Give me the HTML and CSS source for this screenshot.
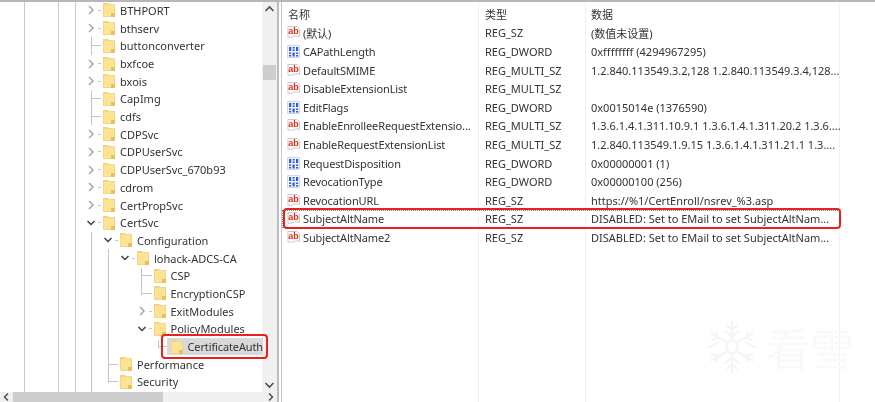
FILE: index.html
```html
<!DOCTYPE html>
<html lang="zh">
<head>
<meta charset="utf-8">
<title>Registry Editor</title>
<link rel="stylesheet" href="styles.css">
</head>
<body>
<svg class="defs" width="0" height="0" aria-hidden="true">
  <symbol id="folder" viewBox="0 0 12 14">
    <path d="M0 1h12v13H0z" fill="#f5d684"/>
    <path d="M1 2h10v11H1z" fill="#fde394"/>
    <path d="M8 10h4v4H8z" fill="#edc057"/>
    <path d="M0 0h5.500v1.500H0z" fill="#f2d27e"/>
  </symbol>
  <symbol id="closed" viewBox="0 0 10 12"><path d="M3 2l4 4-4 4" fill="none" stroke="#a6a6a6" stroke-width="1.500"/></symbol>
  <symbol id="open" viewBox="0 0 10 12"><path d="M1.500 4l3.500 3.500L8.500 4" fill="none" stroke="#404040" stroke-width="1.500"/></symbol>
  <symbol id="page" viewBox="0 0 13 13">
    <path d="M1 .5h9l2.500 2.500v7.500c-2-1-3-1-5.500 0s-4 1-6 .5z" fill="#fff" stroke="#c9c9c9"/>
  </symbol>
  <symbol id="bin" viewBox="0 0 13 13">
    <path d="M.5.500h12v12H.5z" fill="#f4f7fd" stroke="#ccd6ea"/>
    <path d="M2 2h2.200v4H2zM5.500 2h2.200v1.500H5.500zM9 2h2.200v4H9zM5.500 4.500h2.200V6H5.500zM2 7.500h2.200V9H2zM5.500 7.500h2.200v4H5.500zM9 7.500h2.200V9H9zM2 10h2.200v1.500H2zM9 10h2.200v1.500H9z" fill="#2f5ad6"/>
  </symbol>
</svg>

<div class="window">
  <div class="topbar"></div>
  <div class="panes">
    <div class="left">
      <div class="left-main">
        <div class="tree">
          <div class="row l0"><span class="slot short"><svg class="chev"><use href="#closed"/></svg></span><span class="item"><svg class="fold"><use href="#folder"/></svg><span>BTHPORT</span></span></div>
          <div class="row l0"><span class="slot short"><svg class="chev"><use href="#closed"/></svg></span><span class="item"><svg class="fold"><use href="#folder"/></svg><span>bthserv</span></span></div>
          <div class="row l0"><span class="slot long"></span><span class="item"><svg class="fold"><use href="#folder"/></svg><span>buttonconverter</span></span></div>
          <div class="row l0"><span class="slot short"><svg class="chev"><use href="#closed"/></svg></span><span class="item"><svg class="fold"><use href="#folder"/></svg><span>bxfcoe</span></span></div>
          <div class="row l0"><span class="slot short"><svg class="chev"><use href="#closed"/></svg></span><span class="item"><svg class="fold"><use href="#folder"/></svg><span>bxois</span></span></div>
          <div class="row l0"><span class="slot long"></span><span class="item"><svg class="fold"><use href="#folder"/></svg><span>CapImg</span></span></div>
          <div class="row l0"><span class="slot long"></span><span class="item"><svg class="fold"><use href="#folder"/></svg><span>cdfs</span></span></div>
          <div class="row l0"><span class="slot short"><svg class="chev"><use href="#closed"/></svg></span><span class="item"><svg class="fold"><use href="#folder"/></svg><span>CDPSvc</span></span></div>
          <div class="row l0"><span class="slot short"><svg class="chev"><use href="#closed"/></svg></span><span class="item"><svg class="fold"><use href="#folder"/></svg><span>CDPUserSvc</span></span></div>
          <div class="row l0"><span class="slot short"><svg class="chev"><use href="#closed"/></svg></span><span class="item"><svg class="fold"><use href="#folder"/></svg><span>CDPUserSvc_670b93</span></span></div>
          <div class="row l0"><span class="slot short"><svg class="chev"><use href="#closed"/></svg></span><span class="item"><svg class="fold"><use href="#folder"/></svg><span>cdrom</span></span></div>
          <div class="row l0"><span class="slot short"><svg class="chev"><use href="#closed"/></svg></span><span class="item"><svg class="fold"><use href="#folder"/></svg><span>CertPropSvc</span></span></div>
          <div class="row l0"><span class="slot short"><svg class="chev"><use href="#open"/></svg></span><span class="item"><svg class="fold"><use href="#folder"/></svg><span>CertSvc</span></span></div>
          <div class="row l1"><span class="slot short"><svg class="chev"><use href="#open"/></svg></span><span class="item"><svg class="fold"><use href="#folder"/></svg><span>Configuration</span></span></div>
          <div class="row l2"><span class="slot short"><svg class="chev"><use href="#open"/></svg></span><span class="item"><svg class="fold"><use href="#folder"/></svg><span>lohack-ADCS-CA</span></span></div>
          <div class="row l3"><span class="slot long"></span><span class="item"><svg class="fold"><use href="#folder"/></svg><span>CSP</span></span></div>
          <div class="row l3"><span class="slot long"></span><span class="item"><svg class="fold"><use href="#folder"/></svg><span>EncryptionCSP</span></span></div>
          <div class="row l3"><span class="slot short"><svg class="chev"><use href="#closed"/></svg></span><span class="item"><svg class="fold"><use href="#folder"/></svg><span>ExitModules</span></span></div>
          <div class="row l3"><span class="slot short"><svg class="chev"><use href="#open"/></svg></span><span class="item"><svg class="fold"><use href="#folder"/></svg><span>PolicyModules</span></span></div>
          <div class="row l4"><span class="slot long"></span><span class="item sel"><svg class="fold"><use href="#folder"/></svg><span class="sel-text">CertificateAuth</span></span></div>
          <div class="row l1"><span class="slot long"></span><span class="item"><svg class="fold"><use href="#folder"/></svg><span>Performance</span></span></div>
          <div class="row l1"><span class="slot long"></span><span class="item"><svg class="fold"><use href="#folder"/></svg><span>Security</span></span></div>
          <div class="mark-tree"></div>
        </div>
        <div class="vscroll">
          <svg class="sb-arrow" viewBox="0 0 15 14"><path d="M3.500 9l4-4 4 4" fill="none" stroke="#505050" stroke-width="1.600"/></svg>
          <div class="vtrack"><div class="vthumb"></div></div>
          <svg class="sb-arrow" viewBox="0 0 15 14"><path d="M3.500 5l4 4 4-4" fill="none" stroke="#505050" stroke-width="1.600"/></svg>
        </div>
      </div>
      <div class="hscroll">
        <svg class="hs-arrow" viewBox="0 0 13 10"><path d="M8 1.500L4.500 5 8 8.500" fill="none" stroke="#505050" stroke-width="1.500"/></svg>
        <div class="htrack"><div class="hthumb"></div></div>
        <svg class="hs-arrow" viewBox="0 0 13 10"><path d="M5 1.500L8.500 5 5 8.500" fill="none" stroke="#505050" stroke-width="1.500"/></svg>
      </div>
    </div>
    <div class="split"></div>
    <div class="right">
      <div class="vals">
        <div class="head"><span class="c-name">名称</span><span class="c-type">类型</span><span class="c-data">数据</span></div>
        <div class="val"><span class="c-name"><svg class="ico" viewBox="0 0 13 13"><use href="#page"/><text x="6.500" y="8" text-anchor="middle" class="abtext">ab</text></svg>(默认)</span><span class="c-type">REG_SZ</span><span class="c-data">(数值未设置)</span></div>
        <div class="val"><span class="c-name"><svg class="ico"><use href="#bin"/></svg>CAPathLength</span><span class="c-type">REG_DWORD</span><span class="c-data">0xffffffff (4294967295)</span></div>
        <div class="val"><span class="c-name"><svg class="ico" viewBox="0 0 13 13"><use href="#page"/><text x="6.500" y="8" text-anchor="middle" class="abtext">ab</text></svg>DefaultSMIME</span><span class="c-type">REG_MULTI_SZ</span><span class="c-data">1.2.840.113549.3.2,128 1.2.840.113549.3.4,128...</span></div>
        <div class="val"><span class="c-name"><svg class="ico" viewBox="0 0 13 13"><use href="#page"/><text x="6.500" y="8" text-anchor="middle" class="abtext">ab</text></svg>DisableExtensionList</span><span class="c-type">REG_MULTI_SZ</span><span class="c-data"></span></div>
        <div class="val"><span class="c-name"><svg class="ico"><use href="#bin"/></svg>EditFlags</span><span class="c-type">REG_DWORD</span><span class="c-data">0x0015014e (1376590)</span></div>
        <div class="val"><span class="c-name"><svg class="ico" viewBox="0 0 13 13"><use href="#page"/><text x="6.500" y="8" text-anchor="middle" class="abtext">ab</text></svg>EnableEnrolleeRequestExtensio...</span><span class="c-type">REG_MULTI_SZ</span><span class="c-data">1.3.6.1.4.1.311.10.9.1 1.3.6.1.4.1.311.20.2 1.3.6....</span></div>
        <div class="val"><span class="c-name"><svg class="ico" viewBox="0 0 13 13"><use href="#page"/><text x="6.500" y="8" text-anchor="middle" class="abtext">ab</text></svg>EnableRequestExtensionList</span><span class="c-type">REG_MULTI_SZ</span><span class="c-data">1.2.840.113549.1.9.15 1.3.6.1.4.1.311.21.1 1.3....</span></div>
        <div class="val"><span class="c-name"><svg class="ico"><use href="#bin"/></svg>RequestDisposition</span><span class="c-type">REG_DWORD</span><span class="c-data">0x00000001 (1)</span></div>
        <div class="val"><span class="c-name"><svg class="ico"><use href="#bin"/></svg>RevocationType</span><span class="c-type">REG_DWORD</span><span class="c-data">0x00000100 (256)</span></div>
        <div class="val"><span class="c-name"><svg class="ico" viewBox="0 0 13 13"><use href="#page"/><text x="6.500" y="8" text-anchor="middle" class="abtext">ab</text></svg>RevocationURL</span><span class="c-type">REG_SZ</span><span class="c-data">https://%1/CertEnroll/nsrev_%3.asp</span></div>
        <div class="val focus"><span class="c-name"><svg class="ico" viewBox="0 0 13 13"><use href="#page"/><text x="6.500" y="8" text-anchor="middle" class="abtext">ab</text></svg>SubjectAltName</span><span class="c-type">REG_SZ</span><span class="c-data">DISABLED: Set to EMail to set SubjectAltNam...</span></div>
        <div class="val"><span class="c-name"><svg class="ico" viewBox="0 0 13 13"><use href="#page"/><text x="6.500" y="8" text-anchor="middle" class="abtext">ab</text></svg>SubjectAltName2</span><span class="c-type">REG_SZ</span><span class="c-data">DISABLED: Set to EMail to set SubjectAltNam...</span></div>
        <div class="mark-row"></div>
      </div>
      <div class="watermark">
        <svg class="flake" viewBox="0 0 56 60">
          <g fill="none" stroke="#f4f5f6" stroke-width="2.400">
            <path d="M28 22V2M22 6l6 6 6-6M20 12l8 7 8-7"/>
            <path d="M28 38v20M22 54l6-6 6 6M20 48l8-7 8 7"/>
            <path d="M22.500 25L5 15M5 23l8-2-2-8M2 31l12-6"/>
            <path d="M33.500 25L51 15M51 23l-8-2 2-8M54 31l-12-6"/>
            <path d="M22.500 35L5 45M5 37l8 2-2 8"/>
            <path d="M33.500 35L51 45M51 37l-8 2 2 8"/>
            <path d="M28 22l6 4v8l-6 4-6-4v-8z"/>
          </g>
        </svg>
        <span class="wm-text">看雪</span>
      </div>
    </div>
  </div>
</div>
</body>
</html>
```

FILE: styles.css
```css
html, body { margin: 0; padding: 0; background: #fff; }
body { width: 875px; height: 402px; overflow: hidden; }
.defs { display: block; height: 0; }
.abtext { font: bold 9px "Liberation Sans", sans-serif; fill: #d92e1c; }

.window {
  width: 875px; height: 402px; display: flex; flex-direction: column;
  font-family: "Noto Sans", "Noto Sans CJK SC", sans-serif;
  font-size: 11px; color: #333; filter: blur(.45px);
}
.topbar { height: 2px; background: #b4b8bb; flex: none; }
.panes { flex: 1; display: flex; min-height: 0; }

.left { width: 277px; flex: none; display: flex; flex-direction: column; }
.left-main { flex: 1; display: flex; min-height: 0; }
.tree {
  position: relative; width: 262px; flex: none; margin-top: -.4px;
  background:
    linear-gradient(#c9c9c9, #c9c9c9) 24px 0 / 1px 100% no-repeat,
    linear-gradient(#c9c9c9, #c9c9c9) 58px 0 / 1px 100% no-repeat,
    linear-gradient(#c9c9c9, #c9c9c9) 75px 0 / 1px 100% no-repeat,
    linear-gradient(#c4c4c4, #c4c4c4) 91px 0 / 1px 100% no-repeat,
    linear-gradient(#c4c4c4, #c4c4c4) 108px 245px / 1px 136px no-repeat,
    linear-gradient(#c4c4c4, #c4c4c4) 141px 266px / 1px 27px no-repeat,
    linear-gradient(#c4c4c4, #c4c4c4) 158px 338px / 1px 9px no-repeat;
}
.row { height: 17.7px; display: flex; align-items: center; white-space: nowrap; }
.l0 { padding-left: 86px; }
.l1 { padding-left: 103px; }
.l2 { padding-left: 120px; }
.l3 { padding-left: 136.500px; }
.l4 { padding-left: 153.500px; }
.slot { width: 17px; height: 100%; flex: none; display: flex; align-items: center; }
.short { background: linear-gradient(#c4c4c4, #c4c4c4) 12px 50% / 3px 1px no-repeat #fff; }
.long { background: linear-gradient(#c4c4c4, #c4c4c4) 5px 50% / 10px 1px no-repeat; }
.chev { width: 10px; height: 12px; }
.item { display: flex; align-items: center; gap: 5px; height: 100%; }
.fold { width: 12px; height: 14px; flex: none; }
.sel { background: #d9d9d9; margin-left: -4px; padding-left: 4px; flex: 1; }
.sel-text { letter-spacing: -.12px; }
.mark-tree {
  position: absolute; left: 161px; top: 332px; width: 103px; height: 21px;
  border: 2px solid #e9211c; border-radius: 4px;
}

.vscroll { width: 15px; flex: none; background: #f0f0f0; display: flex; flex-direction: column; position: relative; z-index: -1; }
.sb-arrow { width: 15px; height: 14px; flex: none; }
.vtrack { flex: 1; padding-top: 49px; }
.vthumb { height: 15px; background: #cdcdcd; margin: 0 1px; }

.hscroll { height: 10px; flex: none; display: flex; background: #f0f0f0; }
.hs-arrow { width: 13px; height: 10px; flex: none; }
.htrack { flex: 1; }
.hthumb { width: 150px; height: 100%; background: #cdcdcd; }

.split {
  width: 5px; flex: none; box-sizing: border-box;
  border-left: 2px solid #b8bcbf; border-right: 1px solid #c4c8cb;
}

.right { flex: 1; min-width: 0; display: flex; flex-direction: column; position: relative; }
.vals {
  position: relative; width: 558px; flex: 1; padding-top: 1.600px;
  background:
    linear-gradient(#eef2f8, #eef2f8) 196px 0 / 1px 100% no-repeat,
    linear-gradient(#eef2f8, #eef2f8) 303px 0 / 1px 100% no-repeat,
    linear-gradient(#eef2f8, #eef2f8) 557px 0 / 1px 100% no-repeat;
}
.head { height: 20px; display: flex; align-items: center; padding-left: 6px; }
.val { height: 18.600px; display: flex; align-items: center; padding-left: 5px; box-sizing: border-box; }
.c-name { width: 198px; flex: none; display: flex; align-items: center; gap: 3px; white-space: nowrap; overflow: hidden; letter-spacing: -.12px; }
.head .c-name { width: 197px; letter-spacing: 0; }
.c-type { width: 106px; flex: none; white-space: nowrap; }
.c-data { white-space: nowrap; flex: none; }
.ico { width: 13px; height: 13px; flex: none; }
.focus { outline: 1px dotted #8a8a8a; outline-offset: -1px; }
.mark-row {
  position: absolute; left: 1px; top: 206px; width: 554px; height: 17px;
  border: 2px solid #e9211c; border-radius: 4px;
}

.watermark {
  position: absolute; right: 21px; top: 316px; display: flex; align-items: center; gap: 8px;
}
.flake { width: 52px; height: 58px; }
.wm-text {
  font: 300 44px/1 "Noto Sans CJK SC", sans-serif; color: #fafafa;
  text-shadow: 0 0 1px #e8eaec;
}
```
